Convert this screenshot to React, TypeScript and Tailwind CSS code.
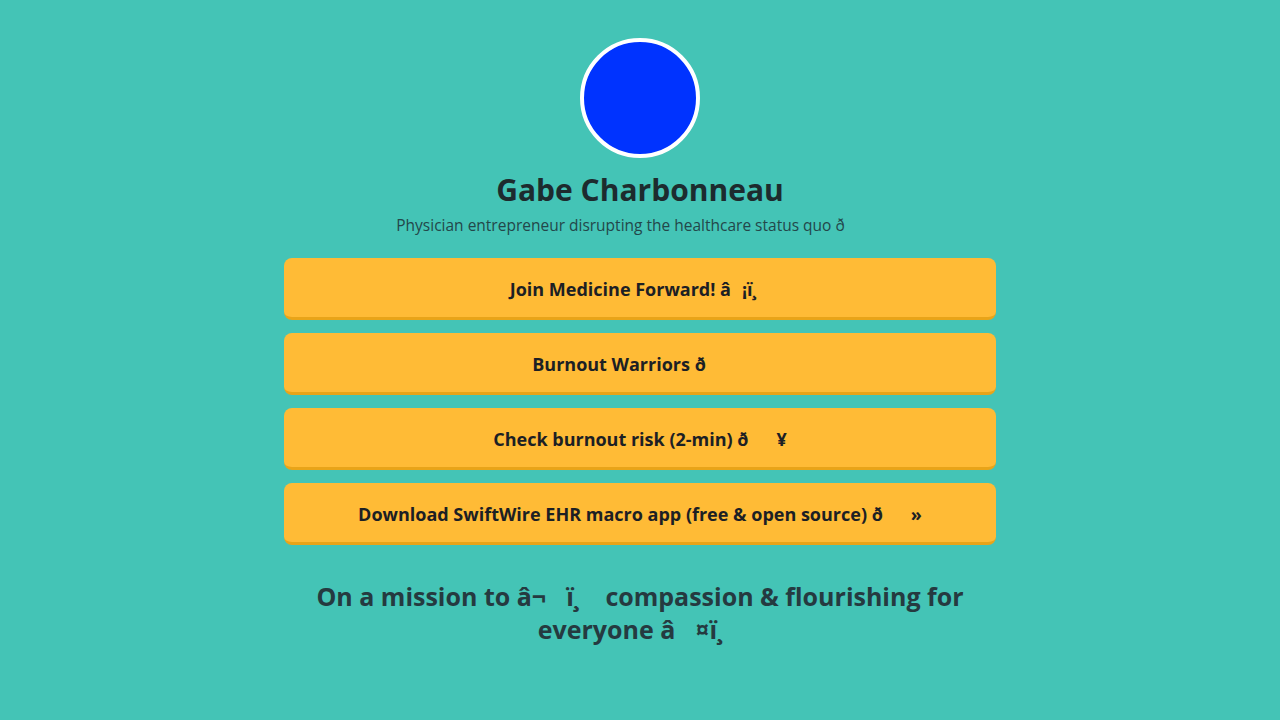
import React from 'react';

const links = [
  'Join Medicine Forward! \u00e2\u009a\u00a1\u00ef\u00b8\u008f',
  'Burnout Warriors \u00f0\u009f\u0092\u0089',
  'Check burnout risk (2-min) \u00f0\u009f\u0094\u00a5',
  'Download SwiftWire EHR macro app (free & open source) \u00f0\u009f\u0092\u00bb',
];

const App: React.FC = () => {
  return (
    <div className="min-h-screen bg-[#44c4b6] font-['Open_Sans',sans-serif] text-[#1f2a2e]">
      <div className="max-w-[712px] mx-auto pt-[38px] flex flex-col items-center">
        <div className="w-[120px] h-[120px] rounded-full border-4 border-white bg-[#0033ff]"></div>

        <h1 className="mt-[13px] text-[30px] leading-[38px] font-bold text-[#1d2b2e]">Gabe Charbonneau</h1>
        <p className="mt-[4px] text-[15.5px] leading-[24px] text-[#23474a]">
          Physician entrepreneur disrupting the healthcare status quo {'\u00f0\u009f\u0092\u0089'}
        </p>

        <div className="w-full mt-[21px] flex flex-col gap-[13px]">
          {links.map((label, i) => (
            <a
              key={i}
              className="block w-full h-[62px] pt-[4px] rounded-lg bg-[#ffbb36] border-b-[3px] border-[#e8a419] flex items-center justify-center text-[18px] font-bold text-[#1c2024]"
            >
              {label}
            </a>
          ))}
        </div>

        <h2 className="mt-[35px] px-6 text-center text-[25px] leading-[33px] font-bold text-[#253a40]">
          On a mission to {'\u00e2\u00ac\u0086\u00ef\u00b8\u008f'} compassion & flourishing for everyone {'\u00e2\u009d\u00a4\u00ef\u00b8\u008f'}
        </h2>
      </div>
    </div>
  );
};

export default App;
